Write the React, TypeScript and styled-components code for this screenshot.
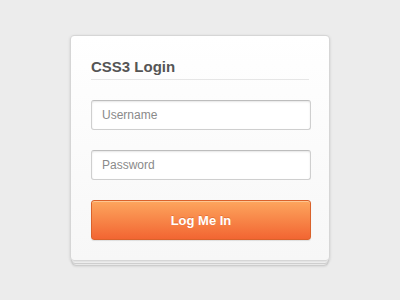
import React from "react";
import styled, { createGlobalStyle } from "styled-components";

const Global = createGlobalStyle`
  html, body { margin: 0; padding: 0; }
  body {
    background: #ececec;
    font-family: "Liberation Sans", Arial, sans-serif;
    width: 400px;
    height: 300px;
    overflow: hidden;
  }
`;

const Page = styled.div`
  width: 400px;
  height: 300px;
  padding-top: 35px;
  box-sizing: border-box;
  display: flex;
  justify-content: center;
  align-items: flex-start;
`;

const Stack = styled.div`
  position: relative;
  width: 260px;
`;

const Sheet = styled.div<{ $offset: number; $inset: number }>`
  position: absolute;
  left: ${(p) => p.$inset}px;
  right: ${(p) => p.$inset}px;
  top: 0;
  bottom: -${(p) => p.$offset}px;
  background: #f8f8f8;
  border: 1px solid #d2d2d2;
  border-radius: 4px;
  box-shadow: 0 1px 2px rgba(0, 0, 0, 0.08);
`;

const Card = styled.form`
  position: relative;
  box-sizing: border-box;
  width: 260px;
  height: 226px;
  padding: 22px 20px 0;
  background: linear-gradient(#ffffff, #f7f7f7);
  border: 1px solid #d6d6d6;
  border-radius: 4px;
  box-shadow: 0 1px 3px rgba(0, 0, 0, 0.12);
  display: flex;
  flex-direction: column;
`;

const Title = styled.h1`
  margin: 0;
  font-size: 15px;
  line-height: 18px;
  font-weight: bold;
  color: #555555;
  padding-bottom: 1px;
  border-bottom: 1px solid #e6e6e6;
  height: 20px;
  box-sizing: content-box;
`;

const Field = styled.input`
  box-sizing: border-box;
  width: 220px;
  height: 30px;
  margin-top: 20px;
  padding: 0 10px;
  border: 1px solid #cfcfcf;
  border-top-color: #bdbdbd;
  border-radius: 3px;
  background: #ffffff;
  box-shadow: inset 0 1px 2px rgba(0, 0, 0, 0.1);
  font-family: "Liberation Sans", Arial, sans-serif;
  font-size: 12px;
  color: #555;
  outline: none;
  &::placeholder { color: #8a8a8a; }
`;

const Button = styled.button`
  box-sizing: border-box;
  width: 220px;
  height: 40px;
  margin-top: 20px;
  border: 1px solid #d9622b;
  border-radius: 3px;
  background: linear-gradient(#fda65e, #f26532);
  box-shadow: inset 0 1px 0 rgba(255, 220, 180, 0.6), 0 1px 1px rgba(0, 0, 0, 0.1);
  color: #ffffff;
  font-family: "Liberation Sans", Arial, sans-serif;
  font-size: 13px;
  font-weight: bold;
  text-shadow: 0 -1px 0 rgba(190, 70, 20, 0.35);
  cursor: pointer;
`;

export default function App() {
  return (
    <>
      <Global />
      <Page>
        <Stack>
          <Sheet $offset={5} $inset={2} />
          <Sheet $offset={3} $inset={1} />
          <Card onSubmit={(e) => e.preventDefault()}>
            <Title>CSS3 Login</Title>
            <Field placeholder="Username" />
            <Field placeholder="Password" type="password" />
            <Button type="submit">Log Me In</Button>
          </Card>
        </Stack>
      </Page>
    </>
  );
}
